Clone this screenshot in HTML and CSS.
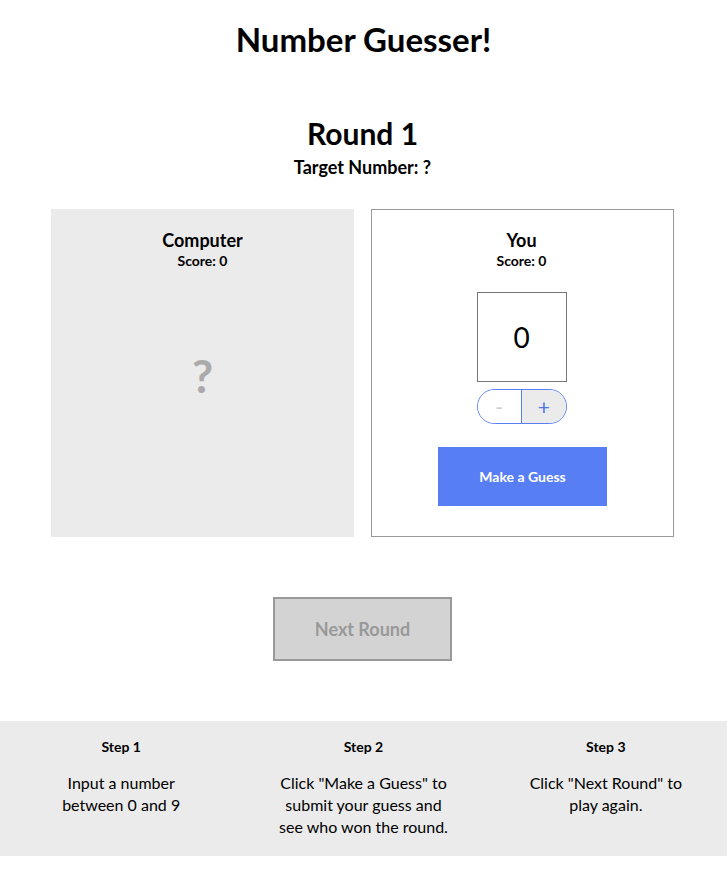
FILE: index.html
```html
<!DOCTYPE html>
<html lang="en">
<head>
<meta charset="utf-8">
<title>Number Guesser!</title>
<link rel="stylesheet" href="styles.css">
</head>
<body>
<header class="header">
  <h1 class="title">Number Guesser!</h1>
</header>
<main class="game">
  <section class="round-info">
    <h2 class="round">Round 1</h2>
    <p class="target">Target Number: ?</p>
  </section>
  <section class="cards">
    <div class="card card-computer">
      <h3 class="card-name">Computer</h3>
      <p class="card-score">Score: 0</p>
      <div class="computer-guess">?</div>
    </div>
    <div class="card card-human">
      <h3 class="card-name">You</h3>
      <p class="card-score">Score: 0</p>
      <div class="guess-box">0</div>
      <div class="stepper">
        <button class="step step-minus">-</button>
        <button class="step step-plus">+</button>
      </div>
      <button class="guess-btn">Make a Guess</button>
    </div>
  </section>
  <div class="next-wrap">
    <button class="next-btn">Next Round</button>
  </div>
</main>
<footer class="steps">
  <div class="step-col">
    <h4 class="step-title">Step 1</h4>
    <p class="step-text">Input a number<br>between 0 and 9</p>
  </div>
  <div class="step-col">
    <h4 class="step-title">Step 2</h4>
    <p class="step-text">Click "Make a Guess" to<br>submit your guess and<br>see who won the round.</p>
  </div>
  <div class="step-col">
    <h4 class="step-title">Step 3</h4>
    <p class="step-text">Click "Next Round" to<br>play again.</p>
  </div>
</footer>
</body>
</html>
```
FILE: styles.css
```css
* { box-sizing: border-box; }
body {
  margin: 0;
  font-family: "Lato", "Noto Sans", sans-serif;
  color: #000;
  background: #fff;
}
.header { padding-top: 19px; text-align: center; }
.title { margin: 0; font-size: 33px; font-weight: 700; line-height: 40px; }
.game { display: flex; flex-direction: column; align-items: center; padding-right: 2px; }
.round-info { margin-top: 54px; text-align: center; }
.round { margin: 0; font-size: 30px; font-weight: 700; line-height: 40px; }
.target { margin: 4px 0 0; font-size: 18px; font-weight: 700; line-height: 20px; }
.cards { margin-top: 32px; display: flex; gap: 17px; }
.card {
  width: 303px; height: 328px;
  display: flex; flex-direction: column; align-items: center;
  padding-top: 20px;
}
.card-computer { background: #ebebeb; }
.card-human { border: 1px solid #999; padding-top: 19px; padding-right: 2px; }
.card-name { margin: 0; font-size: 18px; font-weight: 700; line-height: 22px; }
.card-score { margin: 1px 0 0; font-size: 14px; font-weight: 700; line-height: 18px; }
.computer-guess { margin-top: 78px; font-size: 46px; font-weight: 700; color: #aaa; line-height: 56px; }
.guess-box {
  margin-top: 22px; width: 90px; height: 90px;
  border: 1px solid #777; display: flex; align-items: center; justify-content: center;
  font-size: 28px;
}
.stepper {
  margin-top: 7px; width: 90px; height: 35px; display: flex;
  border: 1px solid #5a7ff4; border-radius: 18px; overflow: hidden;
}
.step {
  flex: 1; border: 0; margin: 0; padding: 0; font-family: inherit; font-size: 21px; line-height: 1;
}
.step-minus { background: #fff; color: #ccc; border-right: 1px solid #5a7ff4; }
.step-plus { background: #ebebeb; color: #4f74ee; }
.guess-btn {
  margin-top: 23px; margin-left: 2px; width: 169px; height: 59px; border: 0; background: #587ef5; color: #fff;
  font-family: inherit; font-size: 14px; font-weight: 700;
}
.next-wrap { margin-top: 60px; margin-bottom: 60px; }
.next-btn {
  width: 179px; height: 64px; background: #d3d3d3; border: 2px solid #999; color: #999;
  font-family: inherit; font-size: 18px; font-weight: 700;
}
.steps {
  background: #ebebeb; display: grid; grid-template-columns: repeat(3, 1fr);
  padding: 17px 0 18px; text-align: center;
}
.step-title { margin: 0; font-size: 14px; font-weight: 700; line-height: 18px; }
.step-text { margin: 16px 0 0; font-size: 16px; line-height: 22px; }
```
